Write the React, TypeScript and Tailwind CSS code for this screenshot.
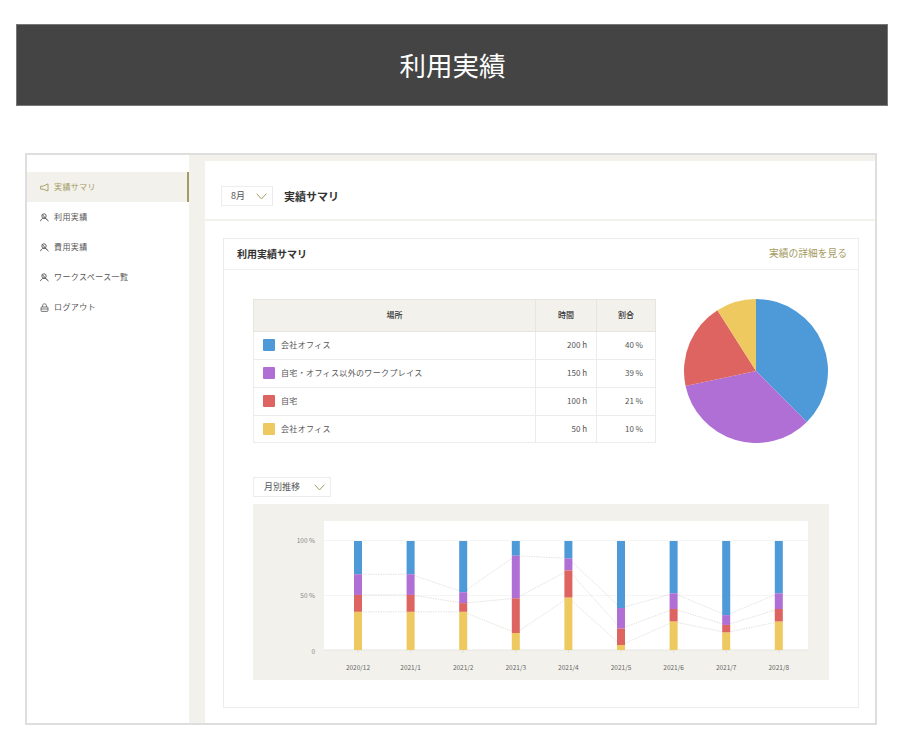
const FONT = "font-['Noto_Sans_CJK_JP','Noto_Sans',sans-serif]";

const colors = { blue: "#4e9ad8", purple: "#b06fd4", red: "#dd6460", yellow: "#edc95f" };

const rows = [
  { color: "bg-[#4e9ad8]", place: "会社オフィス", hours: "200 h", share: "40 %" },
  { color: "bg-[#b06fd4]", place: "自宅・オフィス以外のワークプレイス", hours: "150 h", share: "39 %" },
  { color: "bg-[#dd6460]", place: "自宅", hours: "100 h", share: "21 %" },
  { color: "bg-[#edc95f]", place: "会社オフィス", hours: "50 h", share: "10 %" },
];

// cumulative tops of yellow, red, purple in percent
const months = [
  { label: "2020/12", y: 35, r: 50.5, p: 69.5 },
  { label: "2021/1", y: 35, r: 50.5, p: 69.5 },
  { label: "2021/2", y: 35, r: 43, p: 53 },
  { label: "2021/3", y: 15.6, r: 47.4, p: 86.5 },
  { label: "2021/4", y: 48, r: 73, p: 84 },
  { label: "2021/5", y: 4.6, r: 19.6, p: 38.5 },
  { label: "2021/6", y: 26, r: 37.6, p: 52 },
  { label: "2021/7", y: 16, r: 23, p: 32 },
  { label: "2021/8", y: 26, r: 37.6, p: 52 },
];

function PersonIcon() {
  return (
    <svg width="9" height="9" viewBox="0 0 9 9" fill="none" stroke="#555" strokeWidth="0.9">
      <circle cx="4" cy="3" r="2.2" />
      <path d="M0.4 8.2 C1.2 6.2 2.4 5.2 4 5.2 C5.6 5.2 6.4 6 7 6.8 L8.6 8.2 M2.2 1.4 L7 6.8" />
    </svg>
  );
}

function MegaphoneIcon() {
  return (
    <svg width="9" height="9" viewBox="0 0 9 9" fill="none" stroke="#a59b62" strokeWidth="0.9">
      <path d="M8 0.9 V7.9 L3 6.2 H0.7 V3.2 H3 Z" />
    </svg>
  );
}

function LockIcon() {
  return (
    <svg width="9" height="9" viewBox="0 0 9 9" fill="none" stroke="#555" strokeWidth="0.8">
      <path d="M2.6 4 V2.6 C2.6 1.5 3.4 0.8 4.5 0.8 C5.6 0.8 6.4 1.5 6.4 2.6 V4" />
      <rect x="1" y="4" width="7" height="4.4" rx="0.8" />
      <path d="M1 6 H8" />
    </svg>
  );
}

function Chevron() {
  return (
    <svg width="11" height="7" viewBox="0 0 11 7" fill="none" stroke="#a59b62" strokeWidth="1">
      <path d="M0.7 0.7 L5.5 6 L10.3 0.7" />
    </svg>
  );
}

function NavItem({ icon, label, active }: { icon: React.ReactNode; label: string; active?: boolean }) {
  return (
    <div
      className={
        active
          ? "h-[30px] flex items-center gap-[5px] pl-[13px] bg-[#f2f1ec] border-r-2 border-[#a59b62] text-[#a59b62]"
          : "h-[30px] flex items-center gap-[5px] pl-[13px] text-[#555555]"
      }
    >
      {icon}
      <span className="text-[8px] tracking-[0.4px]">{label}</span>
    </div>
  );
}

function Select({ label, className }: { label: string; className: string }) {
  return (
    <div className={`h-5 flex items-center justify-between bg-white border border-[#ececec] text-[#555555] text-[9px] ${className}`}>
      <span>{label}</span>
      <Chevron />
    </div>
  );
}

function slice(from: number, to: number) {
  const pt = (deg: number) => {
    const a = (deg * Math.PI) / 180;
    return `${72 + 72 * Math.sin(a)} ${72 - 72 * Math.cos(a)}`;
  };
  return `M72 72 L${pt(from)} A72 72 0 ${to - from > 180 ? 1 : 0} 1 ${pt(to)} Z`;
}

function PieChart() {
  return (
    <svg width="144" height="144" viewBox="0 0 144 144" className="shrink-0">
      <path d={slice(0, 135)} fill={colors.blue} />
      <path d={slice(135, 258)} fill={colors.purple} />
      <path d={slice(258, 327.6)} fill={colors.red} />
      <path d={slice(327.6, 360)} fill={colors.yellow} />
    </svg>
  );
}

function BarChart() {
  const barX = (i: number) => 105 + i * 52.6;
  const y = (pct: number) => 146 - pct * 1.09;
  const line = (key: "y" | "r" | "p") =>
    months.map((m, i) => `${barX(i)},${y(m[key])}`).join(" ");

  return (
    <svg width="576" height="176" viewBox="0 0 576 176" className="block">
      <rect x="71" y="17" width="484" height="129" fill="#fff" />
      <path d="M71 36.5 H555 M71 91.5 H555" stroke="#f3f3f0" strokeWidth="0.8" />
      <path d="M71 146 H555" stroke="#e2e2de" strokeWidth="0.8" />
      {(["y", "r", "p"] as const).map((k) => (
        <polyline key={k} points={line(k)} fill="none" stroke="#cfcfcb" strokeWidth="0.6" strokeDasharray="1.5 1" />
      ))}
      {months.map((m, i) => (
        <g key={m.label}>
          <rect x={barX(i) - 4} y={y(100)} width="8" height={y(m.p) - y(100)} fill={colors.blue} />
          <rect x={barX(i) - 4} y={y(m.p)} width="8" height={y(m.r) - y(m.p)} fill={colors.purple} />
          <rect x={barX(i) - 4} y={y(m.r)} width="8" height={y(m.y) - y(m.r)} fill={colors.red} />
          <rect x={barX(i) - 4} y={y(m.y)} width="8" height={146 - y(m.y)} fill={colors.yellow} />
          <path d={`M${barX(i)} 146 V149`} stroke="#dcdcd8" strokeWidth="0.8" />
          <text x={barX(i)} y="166" textAnchor="middle" fontSize="6.5" fill="#666">
            {m.label}
          </text>
        </g>
      ))}
      <text x="62" y="39" textAnchor="end" fontSize="6.5" fill="#888">100 %</text>
      <text x="62" y="94" textAnchor="end" fontSize="6.5" fill="#888">50 %</text>
      <text x="62" y="150" textAnchor="end" fontSize="6.5" fill="#888">0</text>
    </svg>
  );
}

export default function App() {
  return (
    <div className={`w-[900px] h-[740px] bg-white pt-6 pl-4 overflow-hidden ${FONT}`}>
      <div className="w-[872px] h-[82px] flex items-center justify-center bg-[#444444] border border-[#777777] text-white text-[26.5px] pl-[1px]">
        利用実績
      </div>

      <div className="w-[852px] h-[572px] mt-[47px] ml-[9px] flex border-2 border-[#dedede]">
        <aside className="w-[162px] pt-[17px] shrink-0">
          <NavItem active icon={<MegaphoneIcon />} label="実績サマリ" />
          <NavItem icon={<PersonIcon />} label="利用実績" />
          <NavItem icon={<PersonIcon />} label="費用実績" />
          <NavItem icon={<PersonIcon />} label="ワークスペース一覧" />
          <NavItem icon={<LockIcon />} label="ログアウト" />
        </aside>

        <main className="flex-1 bg-[#f2f1ec] pl-4 pt-[6px]">
          <div className="h-full bg-white">
            <div className="h-[60px] pt-[25px] pl-4 flex items-start gap-[11px] border-b-2 border-[#f2f1ec]">
              <Select label="8月" className="w-[52px] pl-[9px] pr-[5px]" />
              <h1 className="h-5 flex items-center text-[11px] font-bold text-[#333333]">実績サマリ</h1>
            </div>

            <section className="w-[636px] h-[470px] mt-[17px] ml-[18px] border border-[#ececec]">
              <div className="h-[31px] flex items-center justify-between pl-[13px] pr-[11px] pb-px border-b border-[#f0f0ee]">
                <h2 className="text-[10px] font-bold text-[#333333]">利用実績サマリ</h2>
                <span className="text-[9.75px] text-[#a59b62]">実績の詳細を見る</span>
              </div>

              <div className="pl-[29px] pt-[29px]">
                <div className="flex items-start gap-[28px]">
                  <table className="w-[403px] table-fixed border-collapse text-[8px] text-[#555555]">
                    <thead>
                      <tr className="h-[32px] bg-[#f2f1ec] text-[#333333] font-medium">
                        <th className="pb-px border border-[#e6e5e0] font-medium">場所</th>
                        <th className="w-[61px] pb-px border border-[#e6e5e0] font-medium">時間</th>
                        <th className="w-[59px] pb-px border border-[#e6e5e0] font-medium">割合</th>
                      </tr>
                    </thead>
                    <tbody>
                      {rows.map((row, i) => (
                        <tr key={i} className={i === 3 ? "h-[27px]" : "h-[28px]"}>
                          <td className="border border-[#ececea] pl-[9px] pb-px">
                            <div className="flex items-center gap-[6px] tracking-[0.35px]">
                              <span className={`w-3 h-3 rounded-[1px] ${row.color}`} />
                              {row.place}
                            </div>
                          </td>
                          <td className="border border-[#ececea] text-right pr-[9px] pb-px">{row.hours}</td>
                          <td className="border border-[#ececea] text-right pr-[12px] pb-px">{row.share}</td>
                        </tr>
                      ))}
                    </tbody>
                  </table>
                  <PieChart />
                </div>

                <Select label="月別推移" className="w-[78px] mt-[34px] pl-[10px] pr-[5px]" />

                <div className="w-[576px] h-[176px] mt-[7px] bg-[#f2f1ec]">
                  <BarChart />
                </div>
              </div>
            </section>
          </div>
        </main>
      </div>
    </div>
  );
}
